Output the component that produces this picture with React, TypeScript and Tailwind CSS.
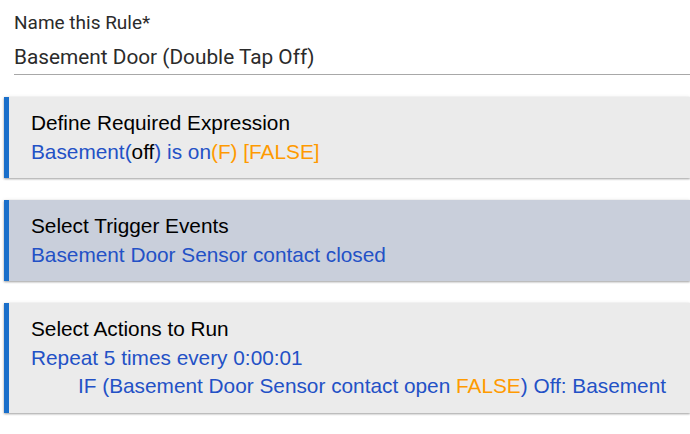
import React from "react";

const Card = ({ bg, children }: { bg: string; children: React.ReactNode }) => (
  <div
    className={`ml-[4px] border-l-[5px] border-[#1a6fca] ${bg} pl-[22px] pt-[12px] pb-[12px] shadow-[0_1px_2px_rgba(0,0,0,0.35),0_0_4px_rgba(0,0,0,0.08)] text-[20.8px] leading-[28.5px]`}
    style={{ fontFamily: '"Liberation Sans", Arial, sans-serif' }}
  >
    {children}
  </div>
);

export default function App() {
  const blue = "text-[#2351c6]";
  const orange = "text-[#ff9a00]";
  return (
    <div className="w-[690px] h-[434px] bg-white overflow-hidden">
      <div className="pl-[14px] pt-[9px]" style={{ fontFamily: "Roboto, sans-serif" }}>
        <div className="text-[19px] leading-[28px] text-[#2b2b2b]">Name this Rule*</div>
        <div className="mt-[6px] pb-[3px] border-b border-[#a8a8a8] text-[20.8px] leading-[28px] text-[#2b2b2b]">
          Basement Door (Double Tap Off)
        </div>
      </div>
      <div className="mt-[22px] flex flex-col gap-[22px]">
        <Card bg="bg-[#ebebeb]">
          <div className="text-black">Define Required Expression</div>
          <div className={blue}>
            Basement(<span className="text-black">off</span>) is on
            <span className={orange}>(F) [FALSE]</span>
          </div>
        </Card>
        <Card bg="bg-[#c9cfdb]">
          <div className="text-black">Select Trigger Events</div>
          <div className={blue}>Basement Door Sensor contact closed</div>
        </Card>
        <Card bg="bg-[#ebebeb]">
          <div className="text-black">Select Actions to Run</div>
          <div className={blue}>Repeat 5 times every 0:00:01</div>
          <div className={`${blue} pl-[47px]`}>
            IF (Basement Door Sensor contact open <span className={orange}>FALSE</span>) Off: Basement
          </div>
        </Card>
      </div>
    </div>
  );
}
